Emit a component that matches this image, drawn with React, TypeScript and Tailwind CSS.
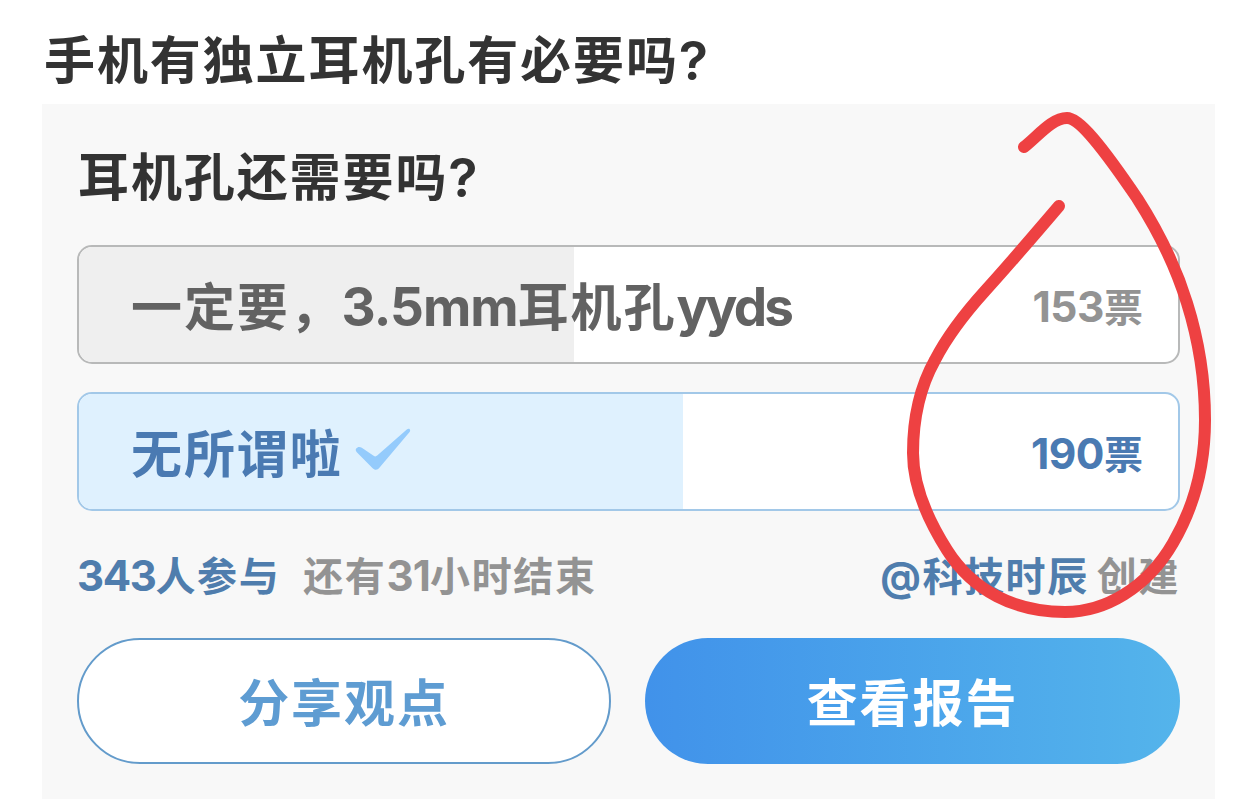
import React from 'react';
import { clsx } from 'clsx';

interface PollOption {
  id: string;
  label: React.ReactNode;
  votes: number;
  percent: number;
  selected: boolean;
}

const options: PollOption[] = [
  {
    id: 'required',
    label: (
      <>
        一定要，
        <span className="-ml-px text-[53px] tracking-[-1px]">3.5mm</span>
        耳机孔
        <span className="text-[53px] tracking-[-2.8px]">yyds</span>
      </>
    ),
    votes: 153,
    percent: 45,
    selected: false,
  },
  { id: 'whatever', label: '无所谓啦', votes: 190, percent: 55, selected: true },
];

const CheckMark: React.FC = () => (
  <svg className="-mt-[9px] ml-3 h-[44px] w-[56px] shrink-0" viewBox="0 0 56 44" fill="#94cbfc">
    <path d="M1.2 20.6 C2.6 18.6 4.8 18.5 6.8 19.8 L18.6 27.8 C19.9 28.6 21 28.6 22.2 27.6 L51.8 1.6 C54 -0.2 56.2 1.6 54.6 4 L24.6 39.6 C22.4 42.4 19.8 42.6 17.4 40 L1.8 24.2 C0.6 23 0.4 21.8 1.2 20.6 Z" />
  </svg>
);

const QuestionMark: React.FC = () => <span className="text-[54px] font-semibold">?</span>;

const OptionRow: React.FC<{ option: PollOption }> = ({ option }) => (
  <div
    className={clsx(
      'relative h-[119px] overflow-hidden rounded-[15px] border-2 bg-white',
      option.selected ? 'border-[#a2c8e8]' : 'border-[#b8b9b9]',
    )}
  >
    {/* Result bar */}
    <div
      className={clsx('absolute inset-y-0 left-0', option.selected ? 'bg-[#dff1fe]' : 'bg-[#efefef]')}
      style={{ width: `${option.percent}%` }}
    />
    <div
      className={clsx(
        'relative flex h-full items-center justify-between pt-[5px] pr-[35px] pl-[52px] leading-none',
        option.selected ? 'text-[#4a7ab2]' : 'text-[#626262]',
      )}
    >
      <div className="flex items-center">
        <span className="text-[51px] tracking-[1.9px]">{option.label}</span>
        {option.selected && <CheckMark />}
      </div>
      <span className={clsx('text-[39px]', !option.selected && 'text-[#939393]')}>
        <span className="text-[42.5px] tracking-[-0.5px]">{option.votes}</span>票
      </span>
    </div>
  </div>
);

// Hand-drawn loop around the vote counts
const MarkerLoop: React.FC = () => (
  <svg
    className="pointer-events-none absolute top-0 left-0 h-[808px] w-[1256px]"
    viewBox="0 0 1256 808"
    fill="none"
    stroke="#ee4142"
    strokeWidth="12"
    strokeLinecap="round"
    strokeLinejoin="round"
  >
    <path d="M1024 147 C1038 136 1052 118 1067 118 C1079 118 1101 145 1137 198 C1155 226 1175 264 1187 303 C1198 338 1205 380 1205 420 C1205 466 1194 507 1173 543 C1147 588 1105 612 1065 612 C1015 612 973 591 947 550 C928 520 913 487 913 453 C913 416 921 385 935 360 C949 333 966 312 985 291 C1006 268 1030 240 1059 206" />
  </svg>
);

const App: React.FC = () => {
  return (
    <div className="relative h-[808px] w-[1256px] overflow-hidden bg-white pl-[42px] font-['Inter','Noto_Sans_CJK_SC',sans-serif] font-bold">
      <h1 className="flex h-[104px] items-center pt-[17px] pl-[2px] text-[51px] leading-none tracking-[1.9px] text-[#333333]">
        手机有独立耳机孔有必要吗
        <QuestionMark />
      </h1>

      <section className="flex h-[695px] w-[1173px] flex-col bg-[#f8f8f8] pr-[35px] pl-[35px]">
        <h2 className="flex h-[141px] items-center pt-[6px] pl-[1px] text-[51px] leading-none tracking-[1.9px] text-[#333333]">
          耳机孔还需要吗
          <QuestionMark />
        </h2>

        <div className="flex flex-col gap-[28px]">
          {options.map((option) => (
            <OptionRow key={option.id} option={option} />
          ))}
        </div>

        <div className="flex h-[127px] items-center justify-between pt-[5px] text-[40px] leading-none tracking-[1.6px] text-[#939393]">
          <div className="flex items-center gap-[23px]">
            <span className="-mt-[2px] text-[#4f7dad]">
              <span className="text-[42px] tracking-[-1.4px]">343</span>人参与
            </span>
            <span className="-mt-[2px]">
              还有<span className="text-[42px] tracking-[-0.8px]">31</span>小时结束
            </span>
          </div>
          <div className="flex items-center gap-[8px]">
            <span className="text-[#4f7dad]">@科技时辰</span>
            <span>创建</span>
          </div>
        </div>

        <div className="flex gap-[34px] text-[51px] leading-none tracking-[1.9px]">
          <button className="h-[126px] w-[534px] rounded-full border-2 border-[#639bcb] bg-white pt-[5px] text-[#5e9cd2]">
            分享观点
          </button>
          <button className="h-[126px] w-[535px] rounded-full bg-linear-to-r from-[#4192ea] to-[#54b4eb] pt-[5px] text-white">
            查看报告
          </button>
        </div>
      </section>

      <MarkerLoop />
    </div>
  );
};

export default App;
